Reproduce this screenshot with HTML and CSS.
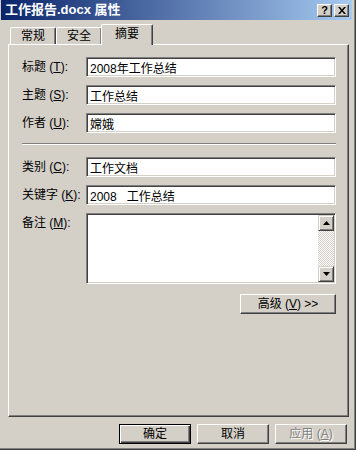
FILE: index.html
```html
<!DOCTYPE html>
<html lang="zh-CN">
<head>
  <meta charset="UTF-8">
  <title>工作报告.docx 属性</title>
  <link rel="stylesheet" href="styles.css">
</head>
<body>

<div class="window">
  <div class="titlebar">
    <span class="title">工作报告.docx 属性</span>
    <span class="caption-btns">
      <span class="cbtn">?</span>
      <span class="cbtn">
        <svg width="8" height="7" viewBox="0 0 8 7"><path d="M0 0h2l2 2.4L6 0h2L5 3.5 8 7H6L4 4.6 2 7H0l3-3.5z" fill="#000"/></svg>
      </span>
    </span>
  </div>

  <div class="tabs">
    <span class="tab">常规</span>
    <span class="tab">安全</span>
    <span class="tab active">摘要</span>
  </div>

  <div class="panel">
    <div class="fields">
      <label>标题 (<u>T</u>):</label>
      <input class="field" type="text" value="2008年工作总结">
      <label>主题 (<u>S</u>):</label>
      <input class="field" type="text" value="工作总结">
      <label>作者 (<u>U</u>):</label>
      <input class="field" type="text" value="嫦娥">
    </div>

    <div class="sep"></div>

    <div class="fields">
      <label>类别 (<u>C</u>):</label>
      <input class="field" type="text" value="工作文档">
      <label>关键字 (<u>K</u>):</label>
      <input class="field" type="text" value="2008   工作总结">
      <label class="top">备注 (<u>M</u>):</label>
      <div class="field memo">
        <div class="scroll">
          <span class="sbtn">
            <svg width="7" height="4" viewBox="0 0 7 4"><path d="M3.5 0L7 4H0z" fill="#000"/></svg>
          </span>
          <span class="sbtn">
            <svg width="7" height="4" viewBox="0 0 7 4"><path d="M0 0h7L3.5 4z" fill="#000"/></svg>
          </span>
        </div>
      </div>
    </div>

    <div class="adv">
      <button class="btn adv-btn">高级 (<u>V</u>) &gt;&gt;</button>
    </div>
  </div>

  <div class="actions">
    <button class="btn default">确定</button>
    <button class="btn">取消</button>
    <button class="btn" disabled>应用 (<u>A</u>)</button>
  </div>
</div>

</body>
</html>
```

FILE: styles.css
```css
body {
  margin: 0;
  background: #fff;
  font: 12px/14px "Liberation Sans", "Noto Sans CJK SC", sans-serif;
  color: #000;
}
.window {
  width: 356px;
  height: 450px;
  box-sizing: border-box;
  background: #d4d0c8;
  padding: 0 3px 0 1px;
  border-right: 1px solid #404040;
  border-bottom: 1px solid #404040;
  box-shadow: inset -1px -1px #808080;
}

/* title bar */
.titlebar {
  height: 20px;
  display: flex;
  align-items: center;
  justify-content: space-between;
  padding: 0 3px 0 4px;
  background: linear-gradient(to right, #0a246a, #a6caf0);
}
.title {
  color: #fff;
  font-weight: bold;
  font-size: 13px;
}
.caption-btns {
  display: flex;
  gap: 2px;
}
.cbtn {
  width: 15px;
  height: 13px;
  box-sizing: border-box;
  background: #d4d0c8;
  border: 1px solid;
  border-color: #fff #404040 #404040 #fff;
  box-shadow: inset -1px -1px #808080;
  display: flex;
  align-items: center;
  justify-content: center;
  font: bold 11px/10px "Liberation Sans", sans-serif;
}

/* tabs */
.tabs {
  display: flex;
  align-items: flex-end;
  height: 24px;
  margin-left: 9px;
}
.tab {
  height: 17px;
  box-sizing: border-box;
  padding: 0 10px;
  border: 1px solid;
  border-bottom: none;
  border-color: #fff #404040 transparent #fff;
  border-radius: 2px 2px 0 0;
  box-shadow: inset -1px 0 #808080;
  line-height: 17px;
}
.tab.active {
  position: relative;
  z-index: 1;
  height: 21px;
  margin: 0 0 -1px -1px;
  padding: 0 13px;
  background: #d4d0c8;
  line-height: 18px;
}

/* panel */
.panel {
  margin-left: 7px;
  width: 341px;
  height: 373px;
  box-sizing: border-box;
  border: 1px solid;
  border-color: #fff #404040 #404040 #fff;
  box-shadow: inset -1px -1px #808080;
  padding: 12px 0 0 13px;
}
.fields {
  display: grid;
  grid-template-columns: 64px 250px;
  row-gap: 8px;
  align-items: center;
}
.fields label {
  line-height: 20px;
  white-space: nowrap;
}
.fields label.top {
  align-self: start;
}
.field {
  height: 20px;
  box-sizing: border-box;
  margin: 0;
  padding: 0 0 0 3px;
  border: 1px solid;
  border-color: #808080 #fff #fff #808080;
  box-shadow: inset 1px 1px #404040, inset -1px -1px #d4d0c8;
  background: #fff;
  font: inherit;
  color: #000;
  outline: none;
}
.memo {
  height: 71px;
  padding: 1px;
  display: flex;
  justify-content: flex-end;
}
.scroll {
  width: 16px;
  display: flex;
  flex-direction: column;
  justify-content: space-between;
  background: repeating-conic-gradient(#d4d0c8 0 25%, #fff 0 50%) 0 0 / 2px 2px;
}
.sbtn {
  height: 16px;
  box-sizing: border-box;
  background: #d4d0c8;
  border: 1px solid;
  border-color: #d4d0c8 #404040 #404040 #d4d0c8;
  box-shadow: inset 1px 1px #fff, inset -1px -1px #808080;
  display: flex;
  align-items: center;
  justify-content: center;
}
.sep {
  width: 314px;
  border-top: 1px solid #808080;
  border-bottom: 1px solid #fff;
  margin: 10px 0 12px;
}

/* buttons */
.btn {
  height: 20px;
  box-sizing: border-box;
  padding: 0;
  background: #d4d0c8;
  border: 1px solid;
  border-color: #fff #404040 #404040 #fff;
  box-shadow: inset -1px -1px #808080;
  font: inherit;
  color: #000;
}
.btn.default {
  border-color: #000;
  box-shadow: inset 1px 1px #fff, inset -1px -1px #404040, inset -2px -2px #808080;
}
.btn:disabled {
  color: #808080;
  text-shadow: 1px 1px #fff;
}
.adv {
  width: 314px;
  display: flex;
  justify-content: flex-end;
  margin-top: 10px;
}
.adv-btn {
  width: 96px;
}
.actions {
  display: flex;
  justify-content: flex-end;
  gap: 6px;
  margin-top: 7px;
  padding-right: 5px;
}
.actions .btn {
  width: 72px;
}
```
